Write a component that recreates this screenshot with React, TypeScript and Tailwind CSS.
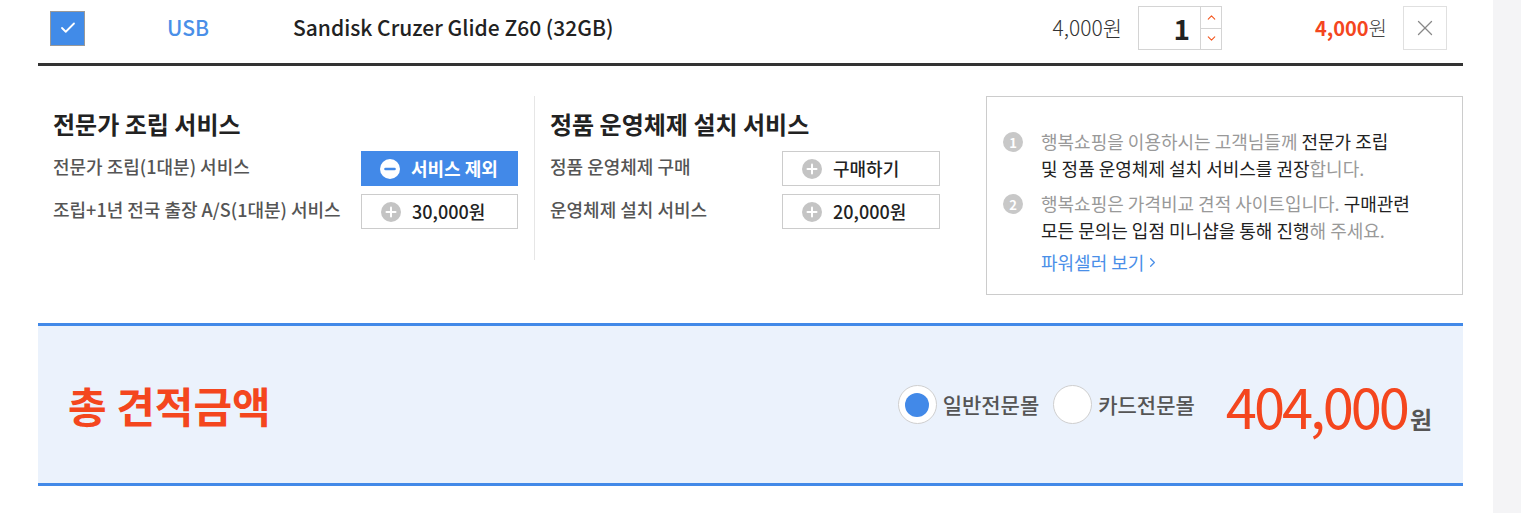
import { Check, ChevronUp, ChevronDown, X, ChevronRight } from 'lucide-react'

const font = "font-['Noto_Sans_CJK_KR','Noto_Sans',sans-serif]"

function CircleIcon({ minus, gray }: { minus?: boolean; gray?: boolean }) {
  return (
    <span className={`flex h-5 w-5 items-center justify-center rounded-full ${gray ? 'bg-[#c4c4c4]' : 'bg-white'}`}>
      <svg viewBox="0 0 20 20" className="h-5 w-5">
        <path d="M5.5 10h9" stroke={gray ? '#fff' : '#4289e8'} strokeWidth={minus ? 2.6 : 2} strokeLinecap="round" />
        {!minus && <path d="M10 5.5v9" stroke="#fff" strokeWidth={2} strokeLinecap="round" />}
      </svg>
    </span>
  )
}

function ServiceButton({ label, active, width }: { label: string; active?: boolean; width: string }) {
  return (
    <button
      className={`flex h-[35px] ${width} items-center gap-[11px] pl-[19px] text-[18px] ${
        active ? 'bg-[#4289e8] font-bold text-white' : 'border border-[#cccccc] bg-white font-medium text-[#222]'
      }`}
    >
      <CircleIcon minus={active} gray={!active} />
      <span>{label}</span>
    </button>
  )
}

const leftRows = [
  { label: '전문가 조립(1대분) 서비스', btn: '서비스 제외', active: true },
  { label: '조립+1년 전국 출장 A/S(1대분) 서비스', btn: '30,000원', active: false },
]
const rightRows = [
  { label: '정품 운영체제 구매', btn: '구매하기' },
  { label: '운영체제 설치 서비스', btn: '20,000원' },
]

export default function App() {
  return (
    <div className={`flex h-[513px] w-[1521px] overflow-hidden bg-white ${font}`}>
      <div className="w-[1493px]">
        <div className="ml-[38px] w-[1425px]">
          {/* cart item row */}
          <div className="flex h-[66px] items-start border-b-[3px] border-[#333] pr-[16px] pt-[6px]">
            <div className="flex h-[44px] w-[129px] items-center pl-[12px]">
              <span className="flex h-[35px] w-[35px] items-center justify-center border border-[#999] bg-[#418be8]">
                <Check className="h-[18px] w-[18px] text-white" strokeWidth={2.4} />
              </span>
            </div>
            <div className="flex h-[44px] w-[126px] items-center text-[21px] font-medium text-[#4a8fe8]">USB</div>
            <div className="flex h-[44px] flex-1 items-center text-[21px] font-medium text-[#222]">Sandisk Cruzer Glide Z60 (32GB)</div>
            <div className="flex h-[44px] items-center text-[21px] font-light text-[#333]">4,000원</div>
            <div className="ml-[16px] flex h-[44px] w-[84px] border border-[#d4d4d4]">
              <div className="flex flex-1 items-center justify-end pr-[10px] text-[28px] font-bold text-[#222]">1</div>
              <div className="flex w-[21px] flex-col border-l border-[#d4d4d4]">
                <span className="flex flex-1 items-center justify-center border-b border-[#d4d4d4]">
                  <ChevronUp className="h-[13px] w-[13px] text-[#f4561e]" strokeWidth={2} />
                </span>
                <span className="flex flex-1 items-center justify-center">
                  <ChevronDown className="h-[13px] w-[13px] text-[#f4561e]" strokeWidth={2} />
                </span>
              </div>
            </div>
            <div className="flex h-[44px] w-[165px] items-center justify-end text-[20px]">
              <span className="font-bold text-[#f4461e]">4,000</span>
              <span className="font-light text-[#444]">원</span>
            </div>
            <button className="ml-[16px] flex h-[44px] w-[44px] items-center justify-center border border-[#e0e0e0]">
              <X className="h-[26px] w-[26px] text-[#888]" strokeWidth={1.2} />
            </button>
          </div>

          {/* services */}
          <div className="mt-[30px] flex items-start">
            <div className="h-[164px] w-[496px] pl-[15px] pt-[10px]">
              <h2 className="text-[24px] font-bold text-[#222]">전문가 조립 서비스</h2>
              <div className="mt-[9px] flex flex-col gap-[8px]">
                {leftRows.map((r) => (
                  <div key={r.label} className="flex items-center">
                    <span className="w-[308px] pb-[4px] text-[18px] font-medium text-[#555]">{r.label}</span>
                    <ServiceButton label={r.btn} active={r.active} width="w-[157px]" />
                  </div>
                ))}
              </div>
            </div>
            <div className="h-[164px] w-[452px] border-l border-[#e6e6e6] pl-[15px] pt-[10px]">
              <h2 className="text-[24px] font-bold text-[#222]">정품 운영체제 설치 서비스</h2>
              <div className="mt-[9px] flex flex-col gap-[8px]">
                {rightRows.map((r) => (
                  <div key={r.label} className="flex items-center">
                    <span className="w-[232px] pb-[4px] text-[18px] font-medium text-[#555]">{r.label}</span>
                    <ServiceButton label={r.btn} width="w-[158px]" />
                  </div>
                ))}
              </div>
            </div>
            <div className="h-[199px] w-[477px] border border-[#cccccc] pl-[16px] pt-[31px] text-[18px] leading-[27px]">
              <div className="flex gap-[18px]">
                <span className="mt-[4px] flex h-[20px] w-[20px] shrink-0 items-center justify-center rounded-full bg-[#c8c8c8] text-[13px] font-bold leading-none text-white">1</span>
                <p className="text-[#999]">
                  행복쇼핑을 이용하시는 고객님들께 <span className="text-[#222]">전문가 조립</span>
                  <br />
                  <span className="text-[#222]">및 정품 운영체제 설치 서비스를 권장</span>합니다.
                </p>
              </div>
              <div className="mt-[8px] flex gap-[18px]">
                <span className="mt-[4px] flex h-[20px] w-[20px] shrink-0 items-center justify-center rounded-full bg-[#c8c8c8] text-[13px] font-bold leading-none text-white">2</span>
                <div>
                  <p className="text-[#999]">
                    행복쇼핑은 가격비교 견적 사이트입니다. <span className="text-[#222]">구매관련</span>
                    <br />
                    <span className="text-[#222]">모든 문의는 입점 미니샵을 통해 진행</span>해 주세요.
                  </p>
                  <a className="mt-[5px] flex items-center text-[#4a8fe8]">
                    파워셀러 보기
                    <ChevronRight className="ml-[1px] h-[15px] w-[15px]" strokeWidth={2} />
                  </a>
                </div>
              </div>
            </div>
          </div>

          {/* total */}
          <div className="mt-[28px] flex h-[163px] items-center justify-between border-y-[3px] border-[#4289e8] bg-[#ebf2fc] pl-[30px] pr-[31px]">
            <h2 className="text-[42px] font-bold text-[#f4461e]">총 견적금액</h2>
            <div className="flex items-center">
              <label className="flex items-center gap-[6px]">
                <span className="flex h-[39px] w-[39px] items-center justify-center rounded-full border border-[#cfcfcf] bg-white">
                  <span className="h-[24px] w-[24px] rounded-full bg-[#4289e8]" />
                </span>
                <span className="text-[21px] font-medium text-[#555]">일반전문몰</span>
              </label>
              <label className="ml-[14px] flex items-center gap-[6px]">
                <span className="h-[39px] w-[39px] rounded-full border border-[#cfcfcf] bg-white" />
                <span className="text-[21px] font-medium text-[#555]">카드전문몰</span>
              </label>
              <div className="ml-[31px] flex items-baseline">
                <span className="text-[56px] font-normal tracking-[-3px] text-[#f4461e]">404,000</span>
                <span className="ml-[3px] text-[24px] font-bold text-[#555]">원</span>
              </div>
            </div>
          </div>
        </div>
      </div>
      <div className="w-[28px] bg-[#f4f4f6]" />
    </div>
  )
}
